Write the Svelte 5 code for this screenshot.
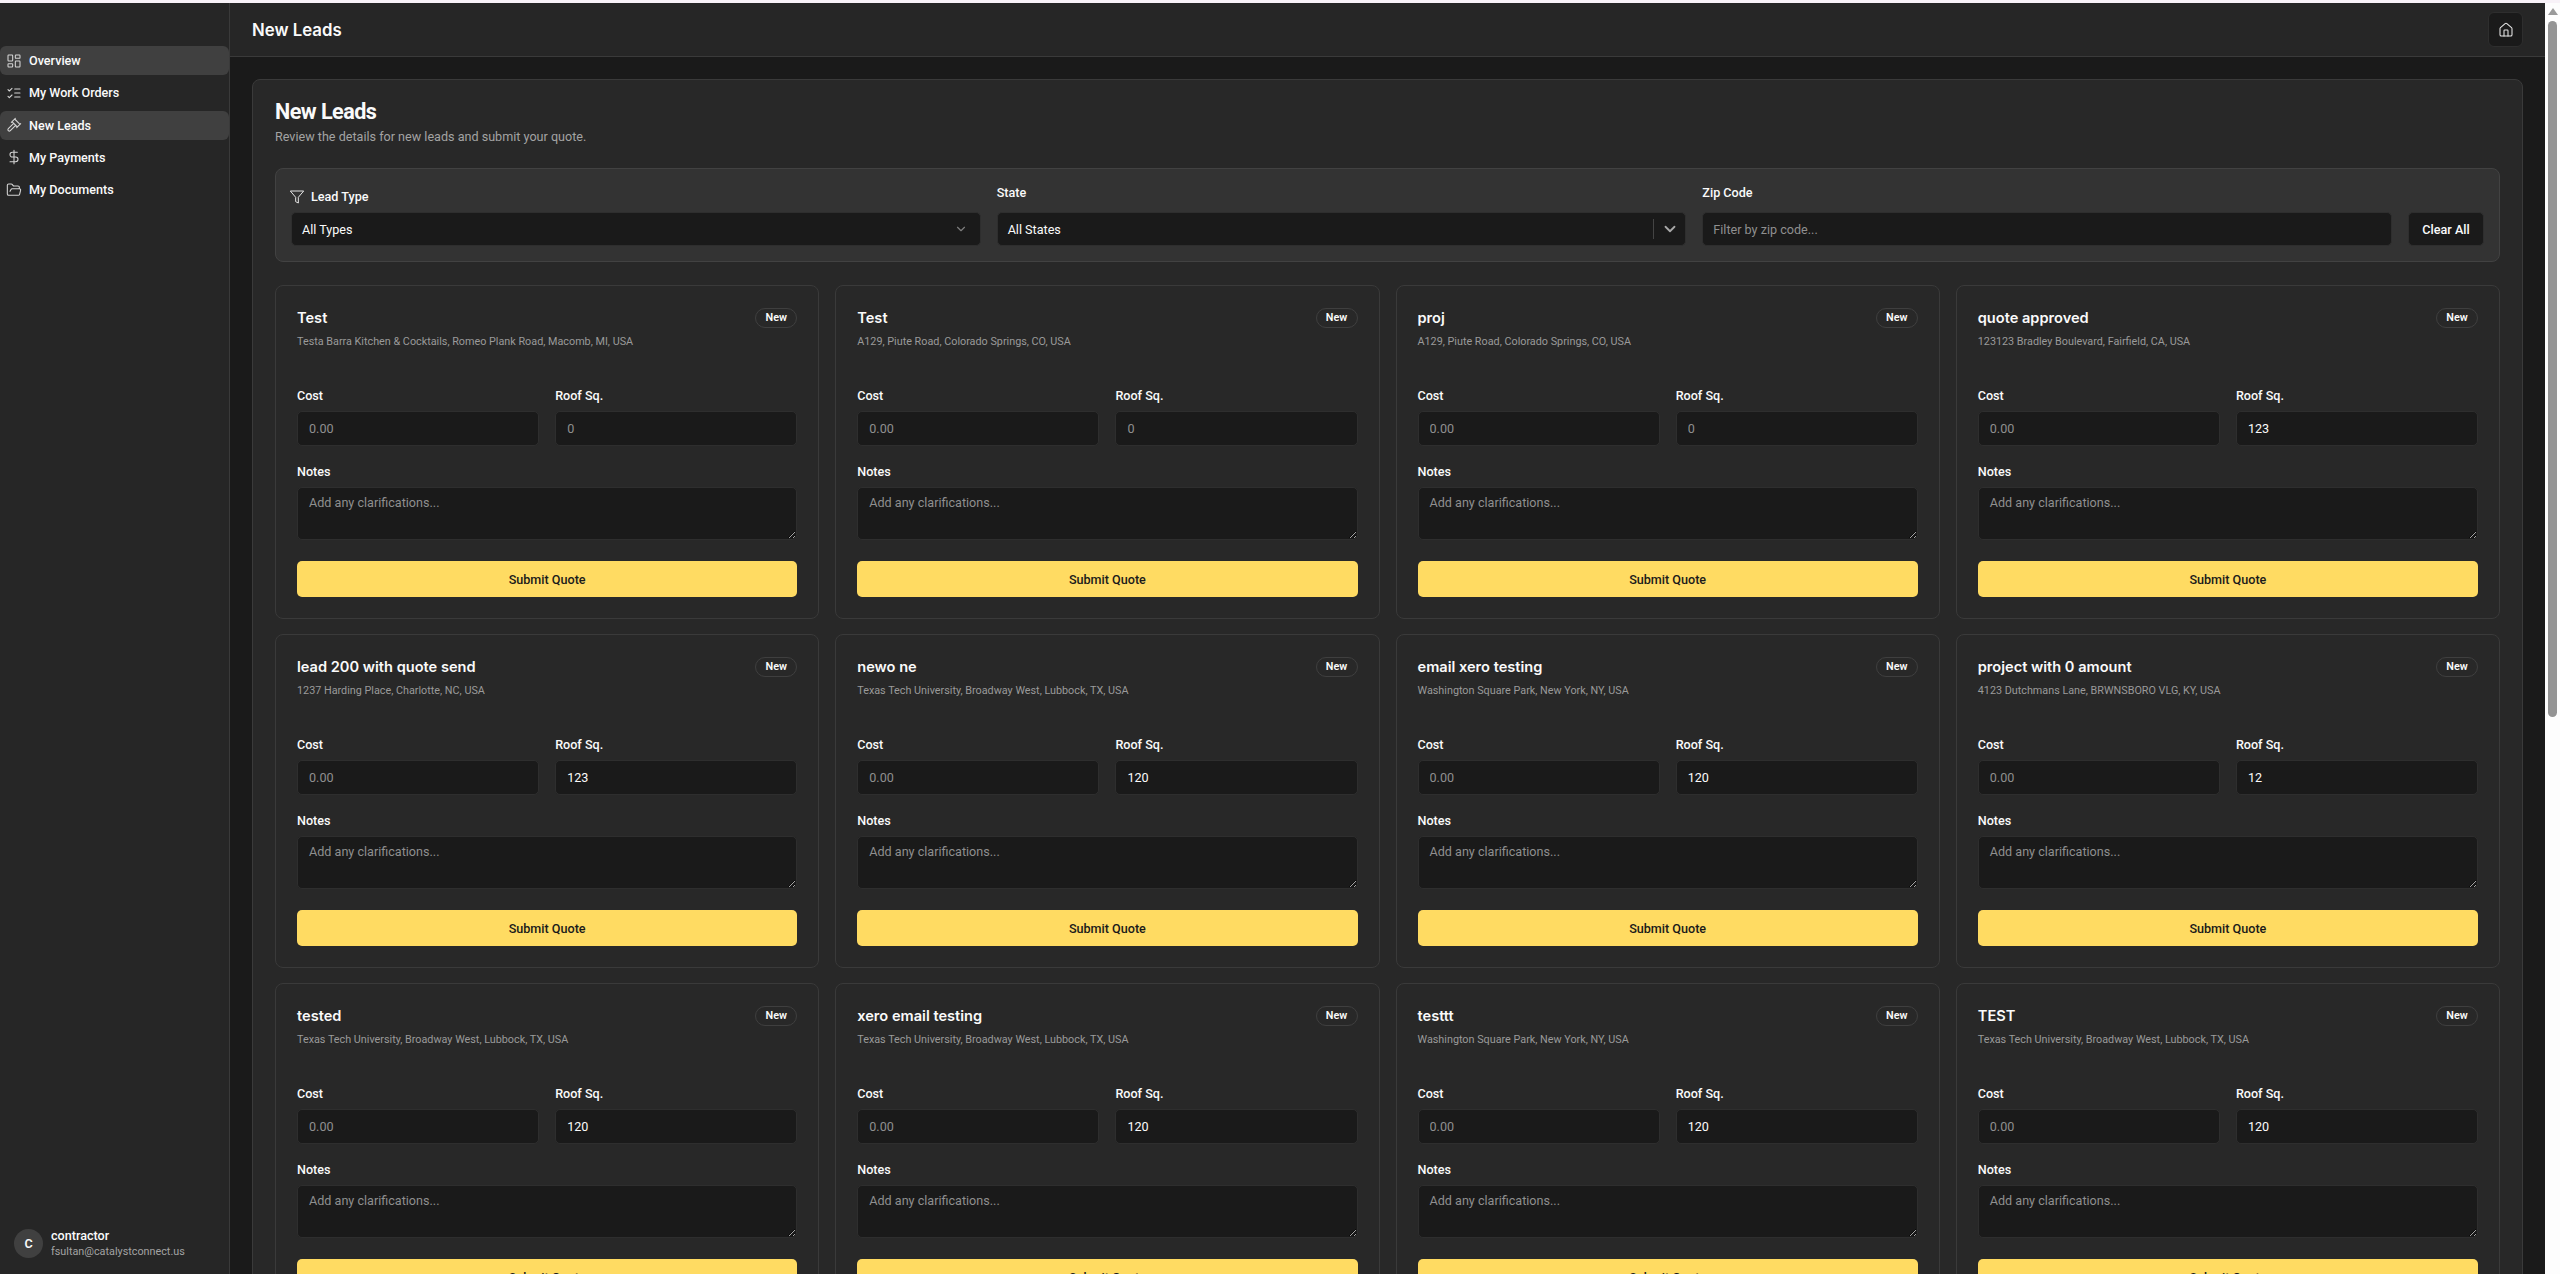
<script lang="ts">
    const navItems = [
        { label: "Overview", icon: "grid", active: true },
        { label: "My Work Orders", icon: "list", active: false },
        { label: "New Leads", icon: "gavel", active: true },
        { label: "My Payments", icon: "dollar", active: false },
        { label: "My Documents", icon: "folder", active: false }
    ];

    const techAddress = "Texas Tech University, Broadway West, Lubbock, TX, USA";
    const parkAddress = "Washington Square Park, New York, NY, USA";
    const piuteAddress = "A129, Piute Road, Colorado Springs, CO, USA";

    const leads = [
        { title: "Test", address: "Testa Barra Kitchen & Cocktails, Romeo Plank Road, Macomb, MI, USA", roof: "" },
        { title: "Test", address: piuteAddress, roof: "" },
        { title: "proj", address: piuteAddress, roof: "" },
        { title: "quote approved", address: "123123 Bradley Boulevard, Fairfield, CA, USA", roof: "123" },
        { title: "lead 200 with quote send", address: "1237 Harding Place, Charlotte, NC, USA", roof: "123" },
        { title: "newo ne", address: techAddress, roof: "120" },
        { title: "email xero testing", address: parkAddress, roof: "120" },
        { title: "project with 0 amount", address: "4123 Dutchmans Lane, BRWNSBORO VLG, KY, USA", roof: "12" },
        { title: "tested", address: techAddress, roof: "120" },
        { title: "xero email testing", address: techAddress, roof: "120" },
        { title: "testtt", address: parkAddress, roof: "120" },
        { title: "TEST", address: techAddress, roof: "120" }
    ];
</script>

<div class="page">
    <div class="top-strip"></div>
    <div class="shell">
        <!-- Sidebar -->
        <aside class="sidebar">
            <nav class="nav">
                {#each navItems as item}
                    <div class="nav-item" class:active={item.active}>
                        <svg class="nav-icon" viewBox="0 0 24 24">
                            {#if item.icon === "grid"}
                                <rect x="3" y="3" width="7" height="9" rx="1" />
                                <rect x="14" y="3" width="7" height="5" rx="1" />
                                <rect x="14" y="12" width="7" height="9" rx="1" />
                                <rect x="3" y="16" width="7" height="5" rx="1" />
                            {:else if item.icon === "list"}
                                <path d="m3 17 2 2 4-4M3 7l2 2 4-4M13 6h8M13 12h8M13 18h8" />
                            {:else if item.icon === "gavel"}
                                <path d="m14.5 12.5-8 8a2.1 2.1 0 1 1-3-3l8-8M16 16l6-6M8 8l6-6M9 7l8 8M21 11l-8-8" />
                            {:else if item.icon === "dollar"}
                                <path d="M12 2v20M17 5H9.5a3.5 3.5 0 0 0 0 7h5a3.5 3.5 0 0 1 0 7H6" />
                            {:else}
                                <path d="m6 14 1.5-2.9A2 2 0 0 1 9.2 10H20a2 2 0 0 1 1.9 2.5l-1.5 6a2 2 0 0 1-2 1.5H4a2 2 0 0 1-2-2V5a2 2 0 0 1 2-2h3.9a2 2 0 0 1 1.7.9l.8 1.2a2 2 0 0 0 1.7.9H18a2 2 0 0 1 2 2v2" />
                            {/if}
                        </svg>
                        <span>{item.label}</span>
                    </div>
                {/each}
            </nav>
            <div class="user">
                <div class="avatar">C</div>
                <div class="user-text">
                    <div class="user-name">contractor</div>
                    <div class="user-mail">fsultan@catalystconnect.us</div>
                </div>
            </div>
        </aside>

        <!-- Right side: header and page content -->
        <div class="content">
            <header class="header">
                <h1>New Leads</h1>
                <button class="home-btn" aria-label="Home">
                    <svg viewBox="0 0 24 24">
                        <path d="M15 21v-8a1 1 0 0 0-1-1h-4a1 1 0 0 0-1 1v8" />
                        <path d="M3 10a2 2 0 0 1 .7-1.5l7-6a2 2 0 0 1 2.6 0l7 6a2 2 0 0 1 .7 1.5v9a2 2 0 0 1-2 2H5a2 2 0 0 1-2-2z" />
                    </svg>
                </button>
            </header>

            <main class="main">
                <section class="panel">
                    <h2>New Leads</h2>
                    <p class="subtitle">Review the details for new leads and submit your quote.</p>

                    <div class="filters">
                        <div class="filter with-icon">
                            <div class="filter-label">
                                <svg class="filter-icon" viewBox="0 0 24 24">
                                    <path d="M22 3H2l8 9.46V19l4 2v-8.54z" />
                                </svg>
                                Lead Type
                            </div>
                            <div class="select">
                                <span>All Types</span>
                                <svg class="chevron small" viewBox="0 0 24 24"><path d="m6 9 6 6 6-6" /></svg>
                            </div>
                        </div>
                        <div class="filter">
                            <div class="filter-label">State</div>
                            <div class="select state">
                                <span>All States</span>
                                <span class="divider"></span>
                                <svg class="chevron" viewBox="0 0 24 24"><path d="m6 9 6 6 6-6" /></svg>
                            </div>
                        </div>
                        <div class="filter">
                            <div class="filter-label">Zip Code</div>
                            <input class="zip" type="text" placeholder="Filter by zip code..." />
                        </div>
                        <button class="clear">Clear All</button>
                    </div>

                    <div class="cards">
                        {#each leads as lead}
                            <article class="card">
                                <div class="card-head">
                                    <h3>{lead.title}</h3>
                                    <span class="badge">New</span>
                                </div>
                                <p class="address">{lead.address}</p>
                                <div class="fields">
                                    <div class="field">
                                        <span class="field-label">Cost</span>
                                        <input type="text" placeholder="0.00" />
                                    </div>
                                    <div class="field">
                                        <span class="field-label">Roof Sq.</span>
                                        <input type="text" placeholder="0" value={lead.roof} />
                                    </div>
                                </div>
                                <div class="field notes">
                                    <span class="field-label">Notes</span>
                                    <textarea placeholder="Add any clarifications..."></textarea>
                                </div>
                                <button class="submit">Submit Quote</button>
                            </article>
                        {/each}
                    </div>
                </section>
            </main>
        </div>

        <!-- Browser scrollbar -->
        <div class="scrollbar">
            <span class="arrow"></span>
            <span class="thumb"></span>
        </div>
    </div>
</div>

<style>
    :global(body) {
        margin: 0;
        background: #1a1a1a;
        overflow: hidden;
    }

    .page {
        height: 1274px;
        display: flex;
        flex-direction: column;
        overflow: hidden;
        font-family: Roboto, "Liberation Sans", sans-serif;
        color: #fafafa;
    }

    .top-strip {
        height: 3px;
        flex: none;
        background: #f8f2f8;
    }

    .shell {
        flex: 1;
        min-height: 0;
        display: flex;
    }

    /* Sidebar */
    .sidebar {
        width: 230px;
        flex: none;
        box-sizing: border-box;
        display: flex;
        flex-direction: column;
        justify-content: space-between;
        background: #262626;
        border-right: 1px solid #3a3a3a;
    }

    .nav {
        display: flex;
        flex-direction: column;
        gap: 3px;
        padding-top: 43px;
    }

    .nav-item {
        height: 29.25px;
        display: flex;
        align-items: center;
        gap: 7px;
        padding-left: 6px;
        border-radius: 6px;
        font-size: 12.6px;
        font-weight: 500;
    }

    .nav-item.active {
        background: #404040;
    }

    .nav-icon {
        width: 16px;
        height: 16px;
        fill: none;
        stroke: #d4d4d4;
        stroke-width: 1.6;
        stroke-linecap: round;
        stroke-linejoin: round;
    }

    .user {
        display: flex;
        align-items: center;
        gap: 8px;
        padding: 0 0 15px 14px;
    }

    .avatar {
        width: 29px;
        height: 29px;
        border-radius: 50%;
        background: #404040;
        display: flex;
        align-items: center;
        justify-content: center;
        font-size: 12.6px;
        font-weight: 600;
    }

    .user-name {
        font-size: 12.6px;
        font-weight: 500;
        line-height: 16px;
    }

    .user-mail {
        font-size: 10.8px;
        line-height: 15px;
        color: #a3a3a3;
    }

    /* Header */
    .content {
        flex: 1;
        min-width: 0;
        display: flex;
        flex-direction: column;
    }

    .header {
        height: 54px;
        flex: none;
        box-sizing: border-box;
        display: flex;
        align-items: center;
        justify-content: space-between;
        padding: 0 22px;
        background: #262626;
        border-bottom: 1px solid #3a3a3a;
    }

    .header h1 {
        margin: 0;
        font-family: Inter, sans-serif;
        font-size: 16.8px;
        font-weight: 600;
    }

    .home-btn {
        width: 35px;
        height: 35px;
        padding: 0;
        display: flex;
        align-items: center;
        justify-content: center;
        background: #1a1a1a;
        border: 1px solid #2e2e2e;
        border-radius: 6px;
    }

    .home-btn svg {
        width: 16px;
        height: 16px;
        fill: none;
        stroke: #e5e5e5;
        stroke-width: 1.6;
        stroke-linecap: round;
        stroke-linejoin: round;
    }

    /* Page content */
    .main {
        flex: 1;
        min-height: 0;
        overflow: hidden;
        padding: 22px 22px 0;
    }

    .panel {
        box-sizing: border-box;
        padding: 17px 22px 22px 22px;
        background: #282828;
        border: 1px solid #3a3a3a;
        border-radius: 8px;
    }

    .panel h2 {
        margin: 0;
        font-size: 21.6px;
        line-height: 29px;
        font-weight: 700;
        letter-spacing: -0.54px;
    }

    .subtitle {
        margin: 2px 0 0;
        font-size: 12.6px;
        line-height: 18px;
        color: #a3a3a3;
    }

    /* Filters */
    .filters {
        margin-top: 22px;
        display: grid;
        grid-template-columns: 1fr 1fr 1fr 76px;
        gap: 16px;
        align-items: end;
        padding: 16px 15px 15px;
        background: #333333;
        border: 1px solid #424242;
        border-radius: 8px;
    }

    .filter {
        display: flex;
        flex-direction: column;
        gap: 11px;
    }

    .filter.with-icon {
        gap: 7px;
    }

    .filter-label {
        display: flex;
        align-items: center;
        gap: 6px;
        font-size: 12.6px;
        line-height: 16px;
        font-weight: 500;
    }

    .filter-icon {
        width: 16px;
        height: 16px;
        margin-left: -2px;
        fill: none;
        stroke: #e5e5e5;
        stroke-width: 1.5;
        stroke-linejoin: round;
    }

    .select,
    .zip {
        height: 34px;
        box-sizing: border-box;
        padding: 0 10px;
        background: #1a1a1a;
        border: 1px solid #2e2e2e;
        border-radius: 5px;
        font-size: 12.6px;
        font-family: inherit;
        color: #fafafa;
    }

    .select {
        display: flex;
        align-items: center;
    }

    .select.state {
        padding-right: 6px;
    }

    .select > span:first-child {
        flex: 1;
    }

    .divider {
        width: 1px;
        height: 20px;
        background: #444444;
        margin-right: 7px;
    }

    .chevron {
        width: 18px;
        height: 18px;
        fill: none;
        stroke: #a8a8a8;
        stroke-width: 2.4;
        stroke-linecap: round;
        stroke-linejoin: round;
    }

    .chevron.small {
        width: 14px;
        height: 14px;
        margin-right: 2px;
        stroke: #7d7d7d;
        stroke-width: 2;
    }

    .zip {
        width: 100%;
        outline: none;
    }

    .zip::placeholder,
    input::placeholder,
    textarea::placeholder {
        color: #8f8f8f;
        opacity: 1;
    }

    .clear {
        height: 34px;
        padding: 0;
        background: #1a1a1a;
        border: 1px solid #2e2e2e;
        border-radius: 5px;
        font-family: inherit;
        font-size: 12.6px;
        font-weight: 500;
        color: #fafafa;
    }

    /* Lead cards */
    .cards {
        margin-top: 23px;
        display: grid;
        grid-template-columns: repeat(4, 1fr);
        gap: 15px 16px;
    }

    .card {
        box-sizing: border-box;
        padding: 21px;
        background: #282828;
        border: 1px solid #3a3a3a;
        border-radius: 8px;
    }

    .card-head {
        display: flex;
        justify-content: space-between;
        align-items: flex-start;
        min-height: 22px;
    }

    .card h3 {
        margin: 0;
        font-family: Inter, sans-serif;
        font-size: 14.6px;
        line-height: 22px;
        font-weight: 600;
    }

    .badge {
        box-sizing: border-box;
        width: 42px;
        height: 20px;
        margin-top: 1px;
        display: flex;
        align-items: center;
        justify-content: center;
        padding-bottom: 2px;
        border: 1px solid #3f3f3f;
        border-radius: 10px;
        font-size: 10.8px;
        font-weight: 600;
    }

    .address {
        margin: 5px 0 0;
        font-size: 10.8px;
        line-height: 16px;
        color: #9a9a9a;
    }

    .fields {
        margin-top: 38px;
        display: grid;
        grid-template-columns: 1fr 1fr;
        gap: 16px;
    }

    .field {
        display: flex;
        flex-direction: column;
        gap: 7px;
    }

    .field-label {
        font-size: 12.6px;
        line-height: 16px;
        font-weight: 500;
    }

    .card input,
    .card textarea {
        width: 100%;
        box-sizing: border-box;
        background: #1a1a1a;
        border: 1px solid #2e2e2e;
        border-radius: 5px;
        font-family: inherit;
        font-size: 12.6px;
        color: #fafafa;
        outline: none;
    }

    .card input {
        height: 35px;
        padding: 0 11px;
    }

    .card textarea {
        display: block;
        height: 53px;
        padding: 6px 11px;
        line-height: 18px;
    }

    .notes {
        margin-top: 18px;
    }

    .submit {
        width: 100%;
        height: 36px;
        margin-top: 21px;
        padding: 0;
        background: #ffdb62;
        border: none;
        border-radius: 5px;
        font-family: inherit;
        font-size: 12.6px;
        font-weight: 500;
        color: #1a1a1a;
    }

    /* Scrollbar */
    .scrollbar {
        width: 15px;
        flex: none;
        position: relative;
        background: #fdfdfd;
    }

    .arrow {
        position: absolute;
        top: 5px;
        left: 3px;
        border-left: 5px solid transparent;
        border-right: 5px solid transparent;
        border-bottom: 7px solid #9a9a9a;
    }

    .thumb {
        position: absolute;
        top: 18px;
        left: 3px;
        width: 9px;
        height: 696px;
        background: #949494;
        border-radius: 5px;
    }
</style>
